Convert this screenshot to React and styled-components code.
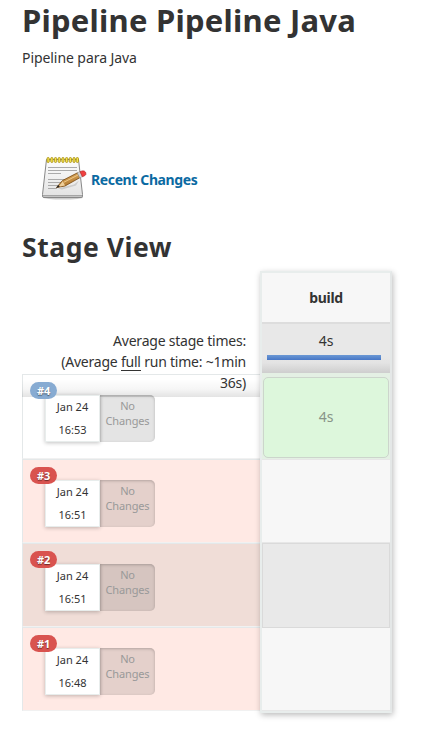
import React from "react";
import styled, { createGlobalStyle } from "styled-components";

const GlobalStyle = createGlobalStyle`
  body {
    margin: 0;
    background: #fff;
    color: #333;
    font: 14px/21px "Noto Sans", "Open Sans", sans-serif;
    overflow: hidden;
  }
  * { box-sizing: border-box; }
`;

const Page = styled.main`
  width: 428px;
  height: 732px;
  padding-left: 22px;
  display: flex;
  flex-direction: column;
  align-items: flex-start;
`;

const Title = styled.h1`
  margin: 0;
  height: 42px;
  font-size: 31px;
  line-height: 40px;
  letter-spacing: 0.24px;
  white-space: nowrap;
`;

const Description = styled.p`
  margin: 5px 0 0;
  height: 21px;
  letter-spacing: -0.07px;
`;

const ChangesLink = styled.a`
  display: flex;
  align-items: center;
  gap: 1px;
  height: 48px;
  margin: 87px 0 0 18px;
  color: #0b6aa2;
  font-weight: 700;
  letter-spacing: -0.38px;
`;

const Heading = styled.h2`
  margin: 25px 0 0;
  height: 43px;
  font-size: 26.5px;
  line-height: 38px;
  letter-spacing: 0.55px;
`;

const StageView = styled.section`
  display: flex;
  align-items: flex-start;
`;

const Builds = styled.div`
  width: 238px;
`;

const Averages = styled.div`
  position: relative;
  z-index: 1;
  height: 126px;
  margin-bottom: -23px;
  padding: 59px 14px 0 0;
  text-align: right;
  letter-spacing: -0.22px;
  background: linear-gradient(rgba(0, 0, 0, 0) 108px, rgba(0, 0, 0, 0.035) 118px, rgba(0, 0, 0, 0.11) 126px);
`;

const Full = styled.span`
  border-bottom: 1px solid #333;
  line-height: 17px;
  display: inline-block;
`;

const BuildRow = styled.div`
  height: ${(p) => p.$height}px;
  padding: 20px 0 0 22px;
  border: 1px solid #e4e8e9;
  border-right: 0;
  border-bottom-color: #f1f1f1;
  background: ${(p) => p.$background};
`;

const BuildCard = styled.div`
  position: relative;
  z-index: 2;
  display: flex;
  width: 110px;
  height: 47px;
  font-size: 11px;
`;

const Badge = styled.span`
  position: absolute;
  left: -15px;
  top: -13px;
  width: 27px;
  height: 17px;
  border-radius: 9px;
  background: ${(p) => (p.$failed ? "#d9534f" : "#87abd2")};
  color: #fff;
  font-size: 11px;
  font-weight: 700;
  line-height: 17px;
  text-align: center;
  letter-spacing: -0.2px;
  text-shadow: 0 1px 1px rgba(0, 0, 0, 0.5);
`;

const Started = styled.div`
  width: 55px;
  height: 47px;
  border: 1px solid #e8edec;
  background: #fff;
  box-shadow: 0 1px 4px rgba(0, 0, 0, 0.24);
  text-align: center;
  line-height: 23px;
  letter-spacing: 0;

  span {
    display: block;
    margin-top: -1px;
    height: 46px;
  }
`;

const Changes = styled.div`
  width: 55px;
  padding-top: 3px;
  border-radius: 0 5px 5px 0;
  background: rgba(0, 0, 0, 0.105);
  box-shadow: inset 0 1px 3px rgba(0, 0, 0, 0.22);
  color: #999;
  text-align: center;
  line-height: 15px;
  letter-spacing: -0.15px;
`;

const StageColumn = styled.div`
  position: relative;
  z-index: 2;
  width: 132px;
  height: 442px;
  border: 2px solid #e8edec;
  border-right-color: #e4e7e7;
  background: #f7f7f7;
  box-shadow: 1px 2px 6px rgba(0, 0, 0, 0.27);
  text-align: center;
`;

const StageName = styled.div`
  height: 49px;
  line-height: 49px;
  font-weight: 700;
  letter-spacing: -0.3px;
`;

const StageAverage = styled.div`
  height: 51px;
  padding: 6px 9px 0 5px;
  border-top: 2px solid #ddd;
  background: linear-gradient(#e8e8e8 32px, #e3e3e3 39px, #cecece);
`;

const Average = styled.div`
  padding-left: 4px;
`;

const Bar = styled.div`
  height: 5px;
  margin-top: 4px;
  background: linear-gradient(#6b98d4, #4777c6);
`;

const StageCell = styled.div`
  height: ${(p) => p.$height}px;
  padding: ${(p) => (p.$passed ? "4px 1px 1px" : 0)};
  border: solid #e2e2e2;
  border-width: ${(p) => (p.$selected ? "1px" : "0 0 1px")};
  border-color: ${(p) => (p.$selected ? "#dadada" : "#e7e7e7")};
  background: ${(p) => (p.$passed ? "#e4f0e4" : p.$selected ? "#e9e9e9" : "#f7f7f7")};
`;

const Duration = styled.div`
  height: 81px;
  border: 1px solid #ccd5cc;
  border-radius: 5px;
  background: #ddf7dc;
  color: #889488;
  line-height: 78px;
`;

const builds = [
  { id: 4, time: "16:53", height: 85, background: "#fff" },
  { id: 3, time: "16:51", height: 84, background: "#ffe9e4", failed: true },
  { id: 2, time: "16:51", height: 84, background: "#f0ddd7", failed: true },
  { id: 1, time: "16:48", height: 84, background: "#ffe9e4", failed: true },
];

function NotepadIcon() {
  return (
    <svg width="50" height="48" viewBox="0 0 50 48">
      <defs>
        <linearGradient id="paper" x2="0" y2="1">
          <stop stopColor="#fdfdfd" />
          <stop offset="1" stopColor="#e2e2e2" />
        </linearGradient>
        <linearGradient id="wood" x1="0.3" x2="0.7" y2="1">
          <stop stopColor="#e3b368" />
          <stop offset="1" stopColor="#a86d24" />
        </linearGradient>
      </defs>
      <ellipse cx="23" cy="42.5" rx="20" ry="2" fill="#ccc" />
      <path d="M6.5 4.5H38.5L42.5 39.5V41Q42.5 42.5 41 42.5H4Q2.5 42.5 2.5 41V39.5Z" fill="url(#paper)" stroke="#888" />
      <path d="M3 40h39v1.5H3z" fill="#a5a5a5" />
      <path d="M8 12.5h29M8 15.5h29M8 18.5h13M8 24.5h22M8 27.5h20M8 30.5h12M8 33.5h9" stroke="#aaa" strokeWidth="1" />
      <g fill="#f4e34a" stroke="#a58a10" strokeWidth=".8">
        {[7, 10.7, 14.4, 18.1, 21.8, 25.5, 29.2, 32.9, 36.2].map((x) => (
          <rect key={x} x={x} y="2.5" width="2.3" height="5" rx="1.1" />
        ))}
      </g>
      <path d="M18 33.5l16-4 5-4-3 5-14 4z" fill="#888" opacity=".3" />
      <path d="M16.5 32.5L22.5 25.5L37.5 17.8L40 22.6L25 31Z" fill="url(#wood)" stroke="#75450c" strokeWidth=".8" />
      <path d="M18.5 31.7L22.8 26.3L25 30.6Z" fill="#efcf9b" />
      <path d="M16.3 32.7l2-2.6 1.5 1.9z" fill="#222" />
      <path d="M24 27.2L38 20" stroke="#efc987" strokeWidth="1" />
      <path d="M37.3 17.9l2.8-1.3 2.5 4.9-2.8 1.4z" fill="#d5d5d5" stroke="#888" strokeWidth=".5" />
      <path d="M40 16.7l2-.8q2.6-.6 3.7 1.5t-1.1 3.4l-2.2 1z" fill="#f04040" stroke="#b02020" strokeWidth=".6" />
    </svg>
  );
}

export default function App() {
  return (
    <>
      <GlobalStyle />
      <Page>
        <Title>Pipeline Pipeline Java</Title>
        <Description>Pipeline para Java</Description>
        <ChangesLink>
          <NotepadIcon />
          <span>Recent Changes</span>
        </ChangesLink>
        <Heading>Stage View</Heading>
        <StageView>
          <Builds>
            <Averages>
              Average stage times:
              <br />
              (Average <Full>full</Full> run time: ~1min
              <br />
              36s)
            </Averages>
            {builds.map((b) => (
              <BuildRow key={b.id} $height={b.height} $background={b.background}>
                <BuildCard>
                  <Started>
                    <span>
                      Jan 24
                      <br />
                      {b.time}
                    </span>
                  </Started>
                  <Changes>
                    No
                    <br />
                    Changes
                  </Changes>
                  <Badge $failed={b.failed}>#{b.id}</Badge>
                </BuildCard>
              </BuildRow>
            ))}
          </Builds>
          <StageColumn>
            <StageName>build</StageName>
            <StageAverage>
              <Average>4s</Average>
              <Bar />
            </StageAverage>
            <StageCell $height={87} $passed>
              <Duration>4s</Duration>
            </StageCell>
            <StageCell $height={83} />
            <StageCell $height={85} $selected />
            <StageCell $height={83} />
          </StageColumn>
        </StageView>
      </Page>
    </>
  );
}
